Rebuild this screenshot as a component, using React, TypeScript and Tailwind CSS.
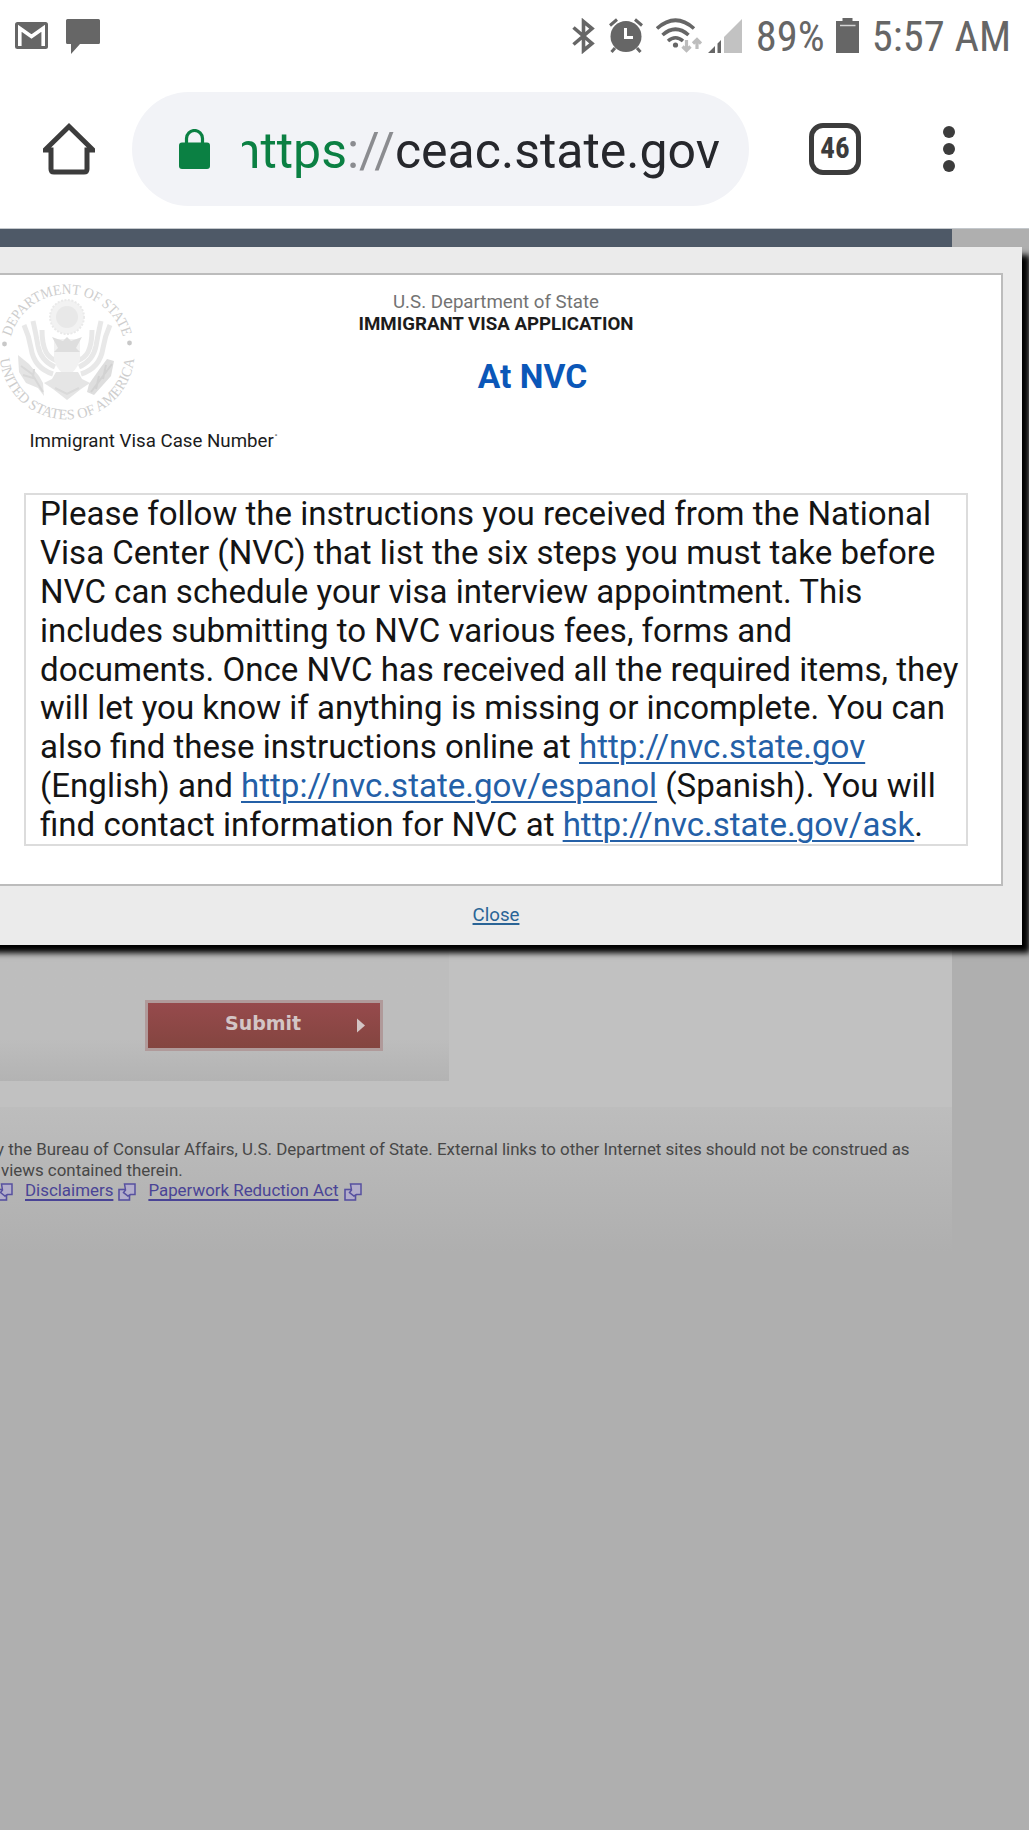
import type { ReactNode } from "react";

function GmailIcon() {
  return (
    <svg className="h-[27px] w-[33px]" viewBox="0 0 33 27">
      <rect width="33" height="27" rx="2.5" fill="#666" />
      <path d="M4.8 24V6.2L16.5 14.5 28.2 6.2V24" fill="none" stroke="#fff" strokeWidth="3.6" />
    </svg>
  );
}

function MessageIcon() {
  return (
    <svg className="h-[35px] w-[34px]" viewBox="0 0 34 35">
      <path d="M1.5 0H32.5Q34 0 34 1.5V23.5Q34 25 32.5 25H14L5 35V25H1.5Q0 25 0 23.5V1.5Q0 0 1.5 0Z" fill="#666" />
    </svg>
  );
}

function BluetoothIcon() {
  return (
    <svg className="h-9 w-[23px]" viewBox="0 0 23 36">
      <path d="M1.5 9.5 20 25.5 11.5 32.5V3.5L20 10.5 1.5 26.5" fill="none" stroke="#666" strokeWidth="3.6" />
    </svg>
  );
}

function AlarmIcon() {
  return (
    <svg className="h-[35px] w-[34px]" viewBox="0 0 34 35">
      <circle cx="17" cy="18.5" r="15.5" fill="#666" />
      <path d="M1 7.5 8 1.5M33 7.5 26 1.5M6 30 2.5 34M28 30 31.5 34" stroke="#666" strokeWidth="3" />
      <path d="M16.5 10V19.5H24" fill="none" stroke="#fff" strokeWidth="3" />
    </svg>
  );
}

function WifiIcon() {
  return (
    <svg className="h-9 w-[46px]" viewBox="0 0 46 36">
      <g fill="none" stroke="#666" strokeWidth="3.6">
        <path d="M1 10.5Q19.5 -6 38 10.5" />
        <path d="M6.5 17Q19.5 5.5 32.5 17" />
        <path d="M12 23Q19.5 16.5 27 23" />
      </g>
      <circle cx="19.5" cy="27" r="2.6" fill="#666" />
      <g fill="none" stroke="#bdbdbd" strokeWidth="3.2">
        <path d="M30.5 22V32M26.5 28.5 30.5 32.5 34.5 28.5" />
        <path d="M41 31V21M37 25.5 41 21.5 45 25.5" />
      </g>
    </svg>
  );
}

function SignalIcon() {
  return (
    <svg className="h-[34px] w-[34px]" viewBox="0 0 34 34">
      <path d="M16 18 34 0V34H16Z" fill="#c2c2c2" />
      <path d="M0 34 7 27V34ZM9.5 24.5 13 21V34H9.5Z" fill="#666" />
    </svg>
  );
}

function BatteryIcon() {
  return (
    <svg className="h-[35px] w-[23px]" viewBox="0 0 23 35">
      <path d="M6.5 0H16.5V3H23V35H0V3H6.5Z" fill="#666" />
      <path d="M4 7.5H19.5" stroke="#d5d5d5" strokeWidth="1.5" />
    </svg>
  );
}

function HomeIcon() {
  return (
    <svg className="h-[52px] w-[52px]" viewBox="0 0 52 52">
      <path
        d="M2 27 26 3.5 50 27H44V46Q44 49 41 49H11Q8 49 8 46V27Z"
        fill="none"
        stroke="#3c3c3c"
        strokeWidth="5"
      />
    </svg>
  );
}

function LockIcon() {
  return (
    <svg className="h-10 w-[31px]" viewBox="0 0 31 40">
      <rect y="13.5" width="31" height="26.5" rx="3" fill="#0b8043" />
      <path d="M7.5 15V9.5A8 8 0 0 1 23.5 9.5V15" fill="none" stroke="#0b8043" strokeWidth="3.2" />
    </svg>
  );
}

function ExternalIcon() {
  return (
    <svg className="h-[18px] w-[18px] shrink-0" viewBox="0 0 18 18">
      <rect x="1" y="6.5" width="10.5" height="10.5" fill="#b3aecb" stroke="#5750a0" strokeWidth="1.6" />
      <path d="M6.5 1H17V11.5H12.5L10 13 5.5 9.5 7.5 7Z" fill="#b3aecb" stroke="#5750a0" strokeWidth="1.5" />
    </svg>
  );
}

function Seal() {
  return (
    <svg className="h-[140px] w-[140px]" viewBox="-70 -70 140 140">
      <defs>
        <path id="seal-top" d="M-58 0A58 58 0 0 1 58 0" />
        <path id="seal-bottom" d="M-67.5 0A67.5 67.5 0 0 0 67.5 0" />
      </defs>
      <g fill="#cdcdcd" fontFamily="Liberation Serif, serif" fontSize="14.5" textAnchor="middle">
        <text>
          <textPath href="#seal-top" startOffset="50%" textLength="151" lengthAdjust="spacingAndGlyphs">DEPARTMENT OF STATE</textPath>
        </text>
        <text>
          <textPath href="#seal-bottom" startOffset="50%" textLength="198" lengthAdjust="spacingAndGlyphs">UNITED STATES OF AMERICA</textPath>
        </text>
      </g>
      <circle cx="-62.5" cy="-8" r="2.4" fill="#c8c8c8" />
      <circle cx="62.5" cy="-9" r="2.4" fill="#c8c8c8" />
      {/* glory above the eagle */}
      <circle cy="-35" r="17" fill="#f2f2f2" stroke="#eaeaea" strokeWidth="2" strokeDasharray="2 1.5" />
      <circle cy="-35" r="11" fill="#e8e8e8" />
      {/* wings */}
      <g fill="none" stroke="#e8e8e8" strokeWidth="5">
        <path d="M-43 -27Q-38 -16 -36 -4Q-33 16 -14 22" />
        <path d="M-34 -31Q-31 -18 -29 -6Q-26 9 -12 15" />
        <path d="M-25 -22Q-25 -8 -21 0Q-18 6 -10 9" />
        <path d="M43 -27Q38 -16 36 -4Q33 16 14 22" />
        <path d="M34 -31Q31 -18 29 -6Q26 9 12 15" />
        <path d="M25 -22Q25 -8 21 0Q18 6 10 9" />
      </g>
      {/* shield, tail and talons */}
      <path d="M-13 -13H13V8Q9 20 0 24Q-9 20 -13 8Z" fill="#f1f1f1" />
      <path d="M-15 -15 -4 -11 0 -15 4 -11 15 -15 9 -4 13 0H-13L-9 -4Z" fill="#dedede" />
      <path d="M-11 20H11L15 27 23 31 14 37 0 48 -14 37 -23 31 -15 27Z" fill="#e5e5e5" />
      <path d="M-12 36 0 42 12 36" fill="none" stroke="#dadada" strokeWidth="2" />
      <path d="M-49 3 -38 12 -28 24 -24 31 -23 44 -29 36 -41 31 -48 20Z" fill="#e4e4e4" />
      <path d="M-46 14 -35 22 -24 40M-44 23 -34 26 -33 17" fill="none" stroke="#d8d8d8" strokeWidth="2" />
      <path d="M47 9 40 7 34 15 22 32 20 40 27 43 44 24Z" fill="#dedede" />
      <path d="M45 12 24 40M39 13 36 27M32 24 29 37" fill="none" stroke="#d2d2d2" strokeWidth="2" />
    </svg>
  );
}

function StatusBar() {
  return (
    <div className="flex h-[74px] items-start justify-between text-[#666]">
      <div className="flex items-start pl-[15px] pt-[19px]">
        <div className="pt-[3px]">
          <GmailIcon />
        </div>
        <div className="ml-[18px]">
          <MessageIcon />
        </div>
      </div>
      <div className="flex items-start pr-[18px] pt-[18px]">
        <BluetoothIcon />
        <div className="ml-[14px]">
          <AlarmIcon />
        </div>
        <div className="ml-[13px]">
          <WifiIcon />
        </div>
        <div className="ml-[6px] pt-px">
          <SignalIcon />
        </div>
        <span className="ml-[14px] w-[68px] whitespace-nowrap font-['Roboto_Condensed'] text-[42.5px] leading-[38px]">89%</span>
        <div className="ml-[12px]">
          <BatteryIcon />
        </div>
        <span className="ml-[13px] whitespace-nowrap font-['Roboto_Condensed'] text-[42.5px] leading-[38px]">5:57 AM</span>
      </div>
    </div>
  );
}

function Toolbar() {
  return (
    <div className="flex h-[154px] items-start">
      <div className="ml-[43px] mt-[49px]">
        <HomeIcon />
      </div>
      <div className="ml-[37px] mt-[18px] flex h-[114px] w-[617px] items-center rounded-full bg-[#f2f3f7] pl-[47px]">
        <LockIcon />
        <div className="ml-[32px] flex w-[478px] justify-end overflow-hidden whitespace-nowrap pt-[4px] text-[50px] leading-[64px] text-[#26272c]">
          <span className="text-[#0b8043]">https</span>
          <span className="text-[#8b8c90]">://</span>
          <span>ceac.state.gov</span>
        </div>
      </div>
      <div className="ml-[60px] mt-[49px] flex h-[52px] w-[52px] items-center justify-center rounded-[14px] border-[5px] border-[#3c3c3c] font-['Roboto_Condensed'] text-[29px] font-bold text-[#3c3c3c]">
        46
      </div>
      <div className="ml-[82px] mt-[52px] flex flex-col gap-[5px]">
        <span className="h-[12px] w-[12px] rounded-full bg-[#3c3c3c]" />
        <span className="h-[12px] w-[12px] rounded-full bg-[#3c3c3c]" />
        <span className="h-[12px] w-[12px] rounded-full bg-[#3c3c3c]" />
      </div>
    </div>
  );
}

function Link({ children }: { children: ReactNode }) {
  return (
    <a href="#" className="text-[#2460a7] underline decoration-[2px] underline-offset-[4px]">
      {children}
    </a>
  );
}

function CaseModal() {
  return (
    <div className="absolute -left-5 top-[18px] h-[698px] w-[1042px] bg-[#ebebeb] pl-5 shadow-[8px_8px_6px_#000]">
      <div className="mt-[26px] flex h-[613px] w-[1003px] flex-col border-2 border-l-0 border-[#bcbcbc] bg-white">
        <div className="flex h-[144px]">
          <div className="ml-[-3px] mt-[7px] w-[140px]">
            <Seal />
          </div>
          <div className="w-[718px] pt-[17px] text-center text-[18.7px] leading-[21.5px]">
            <p className="text-[#737373]">U.S. Department of State</p>
            <p className="font-bold text-[#1c1c1c]">IMMIGRANT VISA APPLICATION</p>
            <h1 className="ml-[73px] mt-[22px] text-[33.6px] font-bold leading-[40px] text-[#0b57b8]">At NVC</h1>
          </div>
        </div>
        <p className="ml-[29.5px] mt-[10px] text-[18.7px] leading-[24px] text-[#1c1c1c]">
          Immigrant Visa Case Number<span className="text-[#888]">&#729;</span>
        </p>
        <div className="ml-[24px] mt-[40px] h-[353px] w-[944px] border-2 border-[#dcdcdc] pl-[14px]">
          <p className="whitespace-nowrap text-[33.05px] leading-[38.88px] text-[#141414]">
            Please follow the instructions you received from the National
            <br />
            Visa Center (NVC) that list the six steps you must take before
            <br />
            NVC can schedule your visa interview appointment. This
            <br />
            includes submitting to NVC various fees, forms and
            <br />
            documents. Once NVC has received all the required items, they
            <br />
            will let you know if anything is missing or incomplete. You can
            <br />
            also find these instructions online at <Link>http://nvc.state.gov</Link>
            <br />
            (English) and <Link>http://nvc.state.gov/espanol</Link> (Spanish). You will
            <br />
            find contact information for NVC at <Link>http://nvc.state.gov/ask</Link>.
          </p>
        </div>
      </div>
      <div className="w-[992px] pt-[17px] text-center">
        <a href="#" className="text-[18.7px] leading-[24px] text-[#2a6496] underline decoration-[1.5px] underline-offset-[2px]">
          Close
        </a>
      </div>
    </div>
  );
}

function FooterLink({ children }: { children: ReactNode }) {
  return (
    <a href="#" className="underline decoration-[1.5px] underline-offset-[3px]">
      {children}
    </a>
  );
}

function Page() {
  return (
    <div className="w-[952px] bg-[#c1c1c1]">
      <div className="h-[18px] bg-[#4e5967]" />
      <div className="h-[834px] w-[449px] bg-linear-to-b from-[#bdbdbd] from-95% to-[#b3b3b3] pt-[753px]">
        <button className="ml-[145px] flex h-[51px] w-[238px] items-center border-[3px] border-[#b09a9a] bg-linear-to-b from-[#964a4c] to-[#844540] pl-[77px] font-['DejaVu_Sans'] text-[19px] font-bold leading-none text-[#d3c5c5]">
          <span className="mt-[-5px]">Submit</span>
          <svg className="ml-auto mr-[15px] h-[15px] w-[8px]" viewBox="0 0 8 14">
            <path d="M0 0 8 7 0 14Z" fill="#d3c5c5" />
          </svg>
        </button>
      </div>
      <div className="h-[26px]" />
      <div className="h-[145px] overflow-hidden bg-linear-to-b from-[#bdbdbd] to-[#afafaf] pt-[32px] text-[16.9px] leading-[20.5px] text-[#474747]">
        <p className="ml-[-4px] whitespace-nowrap">
          y the Bureau of Consular Affairs, U.S. Department of State. External links to other Internet sites should not be construed as
        </p>
        <p className="ml-[1px]">views contained therein.</p>
        <div className="ml-[-5px] flex items-center text-[#4a4496]">
          <div className="pt-[3px]">
            <ExternalIcon />
          </div>
          <span className="ml-[12px] mr-[5px]">
            <FooterLink>Disclaimers</FooterLink>
          </span>
          <div className="pt-[3px]">
            <ExternalIcon />
          </div>
          <span className="ml-[12px] mr-[6px]">
            <FooterLink>Paperwork Reduction Act</FooterLink>
          </span>
          <div className="pt-[3px]">
            <ExternalIcon />
          </div>
        </div>
      </div>
    </div>
  );
}

export default function App() {
  return (
    <div className="h-[1830px] w-[1029px] overflow-hidden bg-white font-[Roboto,sans-serif]">
      <StatusBar />
      <Toolbar />
      <div className="relative h-[1602px] overflow-hidden border-t border-[#c4c8cc] bg-[#afafaf]">
        <Page />
        <CaseModal />
      </div>
    </div>
  );
}
